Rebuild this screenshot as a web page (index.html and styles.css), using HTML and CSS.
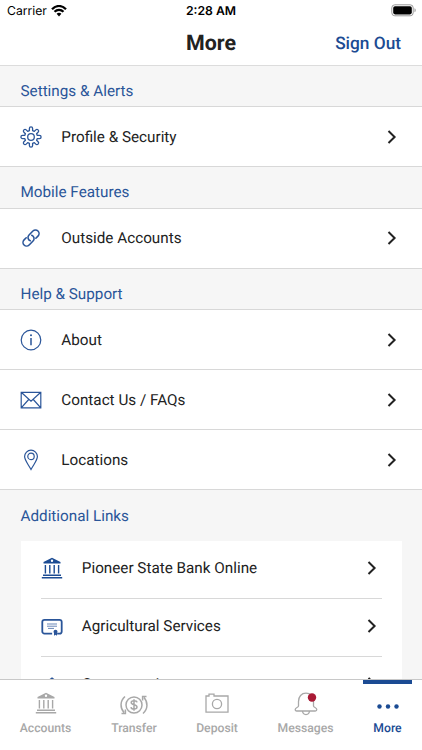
FILE: index.html
```html
<!DOCTYPE html>
<html lang="en">
<head>
<meta charset="utf-8">
<meta name="viewport" content="width=device-width">
<title>More</title>
<link rel="stylesheet" href="styles.css">
</head>
<body>
<svg width="0" height="0" class="defs">
  <symbol id="chev" viewBox="0 0 10 16"><path d="M1.500 2 7.600 8 1.500 14" fill="none" stroke="#222" stroke-width="2"/></symbol>
  <symbol id="bank" viewBox="0 0 22 22"><path fill="currentColor" fill-rule="evenodd" d="M11 .8 19.500 5v1.400h-17V5zM11 2.600a1.200 1.200 0 1 0 0 2.400 1.200 1.200 0 0 0 0-2.400z"/><path fill="none" stroke="currentColor" stroke-width="1.400" d="M4.400 8v8.500M8.800 8v8.500M13.200 8v8.500M17.600 8v8.500M2 18.200h18M.8 20.800h20.400"/></symbol>
</svg>
<div class="phone">
  <div class="status">
    <div class="carrier"><span>Carrier</span><svg width="16" height="12" viewBox="0 0 16 12"><path d="M1 4.200C5-.1 11-.1 15 4.200M3.500 6.800c2.600-2.700 6.400-2.700 9 0" fill="none" stroke="#000" stroke-width="2.200"/><path d="M5.600 8.800c1.500-1.400 3.300-1.400 4.800 0L8 11.400z"/></svg></div>
    <div class="time">2:28 AM</div>
    <svg class="battery" width="26" height="13" viewBox="0 0 26 13"><rect x=".8" y=".8" width="21.400" height="11" rx="3" fill="none" stroke="#999"/><rect x="2.200" y="2.200" width="18.600" height="8.200" rx="1.800"/><path d="M23.500 4.300c1.600.4 1.600 3.600 0 4z" fill="#999"/></svg>
  </div>
  <header><h1>More</h1><a class="signout">Sign Out</a></header>
  <main>
    <h2>Settings &amp; Alerts</h2>
    <div class="row"><svg class="ico" viewBox="0 0 22 22"><path stroke-linejoin="round" stroke-width="1.300" d="M9.400 4.700V2.500a1.600 1.600 0 0 1 3.200 0v2.200l1.700.7 1.500-1.500a1.600 1.600 0 0 1 2.300 2.300l-1.500 1.500.7 1.700h2.200a1.600 1.600 0 0 1 0 3.200h-2.200l-.7 1.700 1.500 1.500a1.600 1.600 0 0 1-2.300 2.300l-1.500-1.500-1.700.7v2.200a1.600 1.600 0 0 1-3.200 0v-2.200l-1.700-.7-1.500 1.500a1.600 1.600 0 0 1-2.300-2.300l1.500-1.500-.7-1.700H2.500a1.600 1.600 0 0 1 0-3.200h2.200l.7-1.700-1.500-1.500a1.600 1.600 0 0 1 2.300-2.300l1.500 1.500z"/><circle cx="11" cy="11" r="3.300" stroke-width="1.300"/></svg><span>Profile &amp; Security</span><svg class="chev"><use href="#chev"/></svg></div>
    <h2>Mobile Features</h2>
    <div class="row"><svg class="ico" viewBox="0 0 22 22"><g stroke-width="1.700" stroke-linecap="round" transform="rotate(-45 11 11) translate(.9 .9) scale(.92)"><path d="M14.500 14.900h3.300a3.900 3.900 0 0 0 0-7.800h-6a3.900 3.900 0 0 0-3.500 5.500"/><path d="M7.500 7.100H4.200a3.900 3.900 0 0 0 0 7.800h6a3.900 3.900 0 0 0 3.500-5.500"/></g></svg><span>Outside Accounts</span><svg class="chev"><use href="#chev"/></svg></div>
    <h2>Help &amp; Support</h2>
    <div class="row"><svg class="ico" viewBox="0 0 22 22"><circle cx="11" cy="11" r="9.800"/><path d="M11 9v7.200" stroke-width="1.500"/><circle cx="11" cy="6.300" r="1" class="solid"/></svg><span>About</span><svg class="chev"><use href="#chev"/></svg></div>
    <div class="row"><svg class="ico" viewBox="0 0 22 22"><path d="M1.200 3.300h19.600v15.600H1.200zM1.200 3.300 11 12.300l9.800-9M1.200 18.900l7.500-8.400M20.800 18.900l-7.500-8.400"/></svg><span>Contact Us / FAQs</span><svg class="chev"><use href="#chev"/></svg></div>
    <div class="row"><svg class="ico" viewBox="0 0 22 22"><path d="M11 20.500C8.200 15.200 4.600 11.300 4.600 7.600a6.400 6.400 0 0 1 12.800 0c0 3.700-3.600 7.600-6.400 12.900z"/><circle cx="11" cy="7.400" r="3.200"/></svg><span>Locations</span><svg class="chev"><use href="#chev"/></svg></div>
    <h2>Additional Links</h2>
    <div class="card">
      <div class="link"><svg class="ico"><use href="#bank"/></svg><span>Pioneer State Bank Online</span><svg class="chev"><use href="#chev"/></svg></div>
      <div class="link"><svg class="ico" viewBox="0 0 22 22"><rect x="1.300" y="4.800" width="19.400" height="13.800" rx="2.200" stroke-width="1.800" stroke-dasharray="33 5 40"/><path d="M6 9h10M6 11.200h10M7 13.400h6" stroke-width=".7"/><circle cx="14.500" cy="16.800" r="2" class="solid"/><path d="M13 16.500h3v4.300l-1.500-1-1.500 1z" class="solid"/></svg><span>Agricultural Services</span><svg class="chev"><use href="#chev"/></svg></div>
      <div class="link"><svg class="ico" viewBox="0 0 22 22"><path d="m11 5 8 6-8 6-8-6z"/></svg><span>Consumer Loans</span><svg class="chev"><use href="#chev"/></svg></div>
    </div>
  </main>
  <nav>
    <div class="tab accounts"><svg width="22" height="24" viewBox="0 0 22 24"><use href="#bank" width="22" height="22"/></svg><span>Accounts</span></div>
    <div class="tab transfer"><svg width="28" height="24" viewBox="0 -1 28 24"><g fill="none" stroke="currentColor" stroke-width="1.500"><circle cx="14" cy="12" r="8"/><path d="M5 3.500C-.1 8-.1 15 4 19.500M1.500 20.500h3.900v-3.900M23 20.500c5.100-4.500 5.100-11.500 1-16M26.500 3.500h-3.900v3.900M17 9.300c-.4-2.200-5.800-2.200-5.800.3 0 3 5.800 1.500 5.800 4.500 0 2.700-5.700 2.700-6 0M14 6.300v11.400"/></g></svg><span>Transfer</span></div>
    <div class="tab deposit"><svg width="26" height="24" viewBox="0 0 26 24"><g fill="none" stroke="currentColor" stroke-width="1.300"><path d="M2 4h3V2.200h5V4h14v16.200H2z"/><circle cx="13" cy="12" r="4.600"/></g></svg><span>Deposit</span></div>
    <div class="tab messages"><svg width="24" height="24" viewBox="0 0 24 24"><g fill="none" stroke="currentColor" stroke-width="1.300"><path d="M4.500 9.500c0-5 3-8.300 7.500-8.300s7.500 3.300 7.500 8.300v4.500c0 1.500 3.300 1.600 3.300 3.500 0 .8-.5 1.500-1.500 1.500H2.700c-1 0-1.500-.7-1.500-1.500 0-1.900 3.300-2 3.300-3.500z"/><path d="M8.500 19c.4 4.700 6.600 4.700 7 0"/></g><circle cx="18" cy="5.500" r="4.200" fill="#a91a35"/></svg><span>Messages</span></div>
    <div class="tab more"><svg width="24" height="24" viewBox="0 0 24 24"><g fill="currentColor"><circle cx="3.500" cy="14.500" r="2.200"/><circle cx="12" cy="14.500" r="2.200"/><circle cx="20.500" cy="14.500" r="2.200"/></g></svg><span>More</span></div>
  </nav>
</div>
</body>
</html>
```
FILE: styles.css
```css
* { box-sizing: border-box; }
body { margin: 0; font-family: Roboto, sans-serif; color: #222; background: #fff; text-rendering: geometricPrecision; }
.defs { position: absolute; }
.phone { width: 422px; height: 750px; display: flex; flex-direction: column; overflow: hidden; }
.status { height: 22px; flex: none; display: grid; grid-template-columns: 1fr auto 1fr; align-items: center; padding: 0 5px 0 7px; font: 12.200px/22px Inter, sans-serif; color: #000; }
.carrier { display: flex; align-items: center; gap: 4px; }
.time { font-weight: 600; margin-right: 2px; }
.battery { justify-self: end; margin-bottom: 2px; }
header { height: 44px; flex: none; display: grid; grid-template-columns: 1fr auto 1fr; align-items: center; padding: 0 21px; border-bottom: 1px solid #dcdcdc; }
h1 { grid-column: 2; margin: 0; font-size: 21.400px; line-height: 42px; font-weight: 700; }
.signout { justify-self: end; font-size: 17.300px; font-weight: 500; color: #1b4b93; }
main { flex: 1; min-height: 0; overflow: hidden; background: #f6f6f6; }
h2 { margin: 0; height: 41.500px; padding: 5px 20.500px 0; font-size: 15.250px; line-height: 40px; font-weight: 400; color: #2a5599; border-bottom: 1px solid #d8d8d8; }
h2:first-child { height: 41px; }
.row { height: 60px; display: flex; align-items: center; padding: 0 21px 0 20px; background: #fff; border-bottom: 1px solid #d8d8d8; font-size: 15.250px; }
.row span, .link span { flex: 1; margin-left: 19.300px; white-space: nowrap; }
.ico { width: 22px; height: 22px; flex: none; color: #1b4b93; fill: none; stroke: #2a5599; stroke-width: 1.200; }
.ico use { stroke: none; }
.solid { fill: #2a5599; stroke: none; }
.chev { width: 10px; height: 16px; flex: none; margin-right: 4px; }
.card { margin: 8px 20.500px 0; background: #fff; padding: 0 20px; }
.card .link { height: 58px; padding-bottom: 3px; display: flex; align-items: center; border-bottom: 1px solid #d8d8d8; font-size: 15.250px; }
.link .chev { margin-right: 4.500px; }
h2:has(+ .card) { border: 0; height: 42.500px; padding-top: 5.500px; }
nav { height: 71px; flex: none; display: flex; background: #fff; border-top: 1px solid #c8c8c8; color: #a8a8a8; }
.tab { display: flex; flex-direction: column; align-items: center; padding-top: 12px; font-size: 12.200px; font-weight: 500; line-height: 16px; }
.tab svg { height: 24px; }
.tab span { margin-top: 4px; }
.accounts { width: 91px; }
.transfer { width: 86px; }
.deposit { width: 80px; }
.messages { width: 97px; }
.more { width: 49px; margin-left: 9px; padding-top: 8px; border-top: 4px solid #1b4b93; color: #1b4b93; }
```
